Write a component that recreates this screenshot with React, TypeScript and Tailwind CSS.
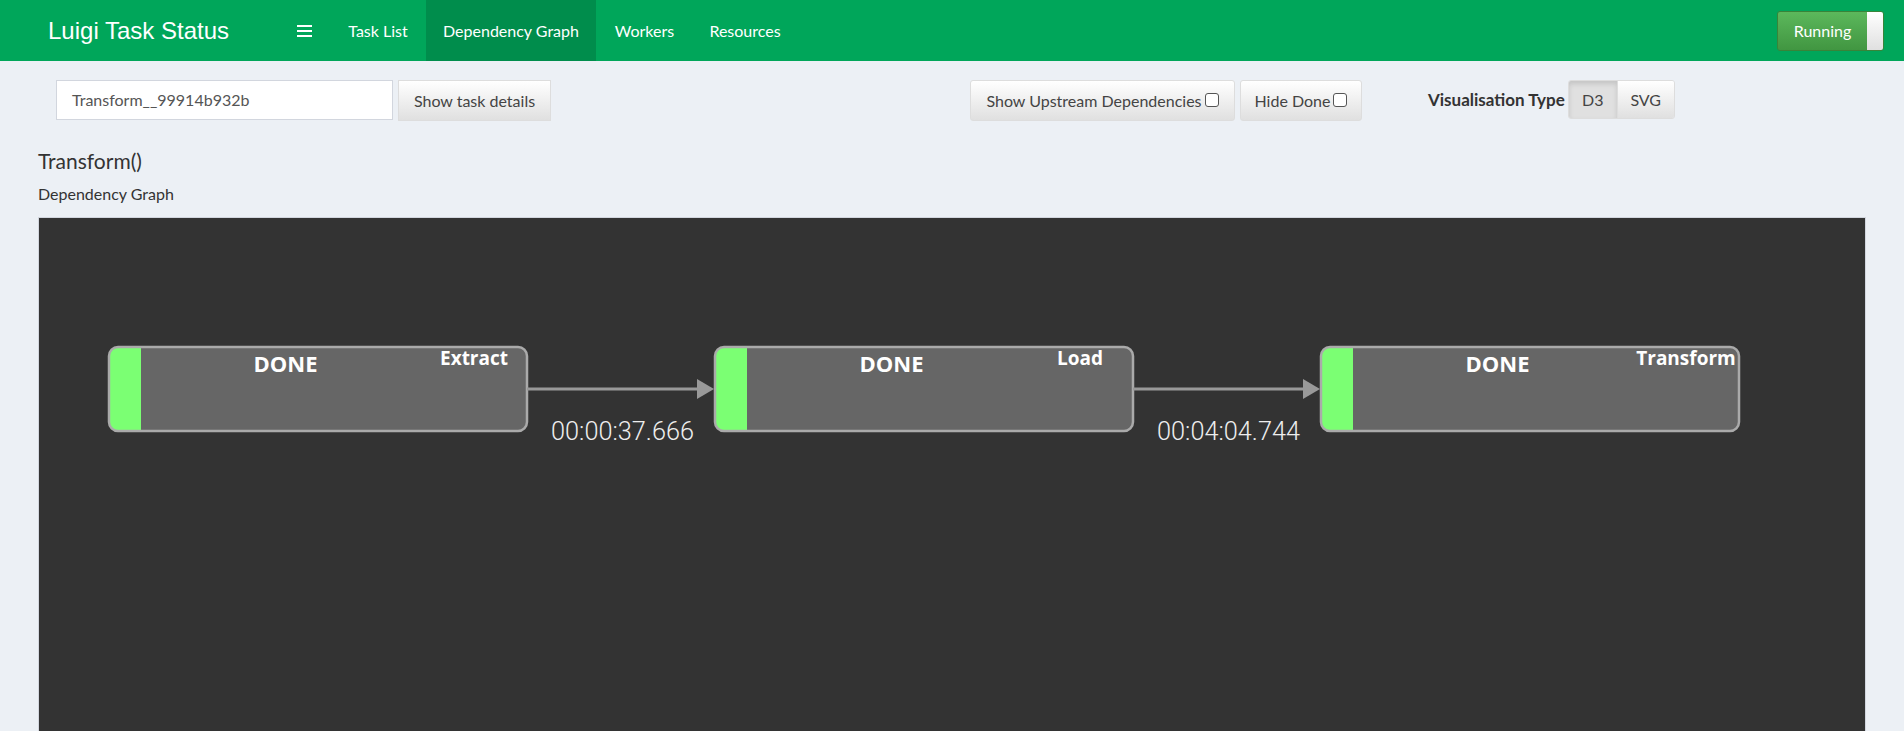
import React from 'react';

const sans = { fontFamily: 'Lato, "Open Sans", sans-serif' };

function Checkbox() {
  return <span className="ml-[3px] inline-block h-[14px] w-[14px] -translate-y-[1px] rounded-[3px] border border-[#555] bg-white align-middle" />;
}

function Node({ x, label }: { x: number; label: string }) {
  const y = 129;
  const w = 418;
  const h = 84;
  return (
    <g>
      <rect x={x} y={y} width={w} height={h} rx={9} fill="#666" />
      <path d={`M${x + 9} ${y} H${x + 32} V${y + h} H${x + 9} A9 9 0 0 1 ${x} ${y + h - 9} V${y + 9} A9 9 0 0 1 ${x + 9} ${y} Z`} fill="#7bff73" />
      <rect x={x} y={y} width={w} height={h} rx={9} fill="none" stroke="#aaa" strokeWidth={2.5} />
      <text x={x + 176.5} y={154} textAnchor="middle" fill="#fff" fontSize={22} fontWeight={700} style={{ fontFamily: '"Open Sans", sans-serif' }}>
        DONE
      </text>
      <text x={x + 365} y={147} textAnchor="middle" fill="#fff" fontSize={19} fontWeight={700} style={{ fontFamily: '"Open Sans", sans-serif' }}>
        {label}
      </text>
    </g>
  );
}

function Edge({ x1, x2, time }: { x1: number; x2: number; time: string }) {
  return (
    <g>
      <line x1={x1} y1={171} x2={x2 - 16} y2={171} stroke="#999" strokeWidth={3} />
      <path d={`M${x2 - 17} 161 L${x2} 171 L${x2 - 17} 181 Z`} fill="#999" />
      <text x={(x1 + x2) / 2 + 2} y={222} textAnchor="middle" fill="#eee" fontSize={25} fontWeight={300} textLength={143} lengthAdjust="spacingAndGlyphs" style={{ fontFamily: 'Roboto, "Open Sans", sans-serif' }}>
        {time}
      </text>
    </g>
  );
}

export default function App() {
  const tabs = [
    { name: 'Task List', w: 'w-[96px]', active: false },
    { name: 'Dependency Graph', w: 'w-[170px]', active: true },
    { name: 'Workers', w: 'w-[97px]', active: false },
    { name: 'Resources', w: 'w-[104px]', active: false },
  ];

  return (
    <div className="min-h-screen overflow-hidden bg-[#ecf0f5] text-[#333]" style={sans}>
      {/* Header */}
      <header className="flex h-[61px] items-stretch bg-[#00a65a] text-white">
        <div className="flex w-[282px] items-center pl-[48px] text-[24px]" style={{ fontFamily: '"Liberation Sans", Arial, sans-serif' }}>
          Luigi Task Status
        </div>
        <div className="flex w-[48px] items-center pl-[15px]">
          <div className="flex w-[15px] flex-col gap-[3px]">
            <span className="h-[2px] bg-white" />
            <span className="h-[2px] bg-white" />
            <span className="h-[2px] bg-white" />
          </div>
        </div>
        {tabs.map(t => (
          <div key={t.name} className={`flex ${t.w} items-center justify-center text-[16px] ${t.active ? 'bg-[#008d4c]' : ''}`}>
            {t.name}
          </div>
        ))}
        <div className="ml-auto mr-[20px] flex items-center">
          <div className="flex h-[40px] overflow-hidden rounded-[3px] border border-[#398439]">
            <div className="flex w-[89px] items-center justify-center bg-gradient-to-b from-[#5cb85c] to-[#419641] text-[16px] text-white">
              Running
            </div>
            <div className="w-[16px] bg-gradient-to-b from-white to-[#e0e0e0]" />
          </div>
        </div>
      </header>

      {/* Controls */}
      <div className="flex items-start pl-[56px] pt-[19px] text-[16px] text-[#444]">
        <div className="flex h-[40px] w-[337px] items-center border border-[#d2d6de] bg-white pl-[15px] text-[#555]">
          Transform__99914b932b
        </div>
        <button className="ml-[5px] h-[41px] w-[153px] border border-[#ddd] bg-gradient-to-b from-white to-[#e0e0e0] text-[#444]">
          Show task details
        </button>

        <button className="ml-[419px] flex h-[41px] w-[265px] items-center justify-center rounded-[3px] border border-[#ddd] bg-gradient-to-b from-white to-[#e0e0e0]">
          Show Upstream Dependencies
          <Checkbox />
        </button>
        <button className="ml-[5px] flex h-[41px] w-[122px] items-center justify-center rounded-[3px] border border-[#ddd] bg-gradient-to-b from-white to-[#e0e0e0]">
          Hide Done
          <Checkbox />
        </button>

        <div className="ml-[66px] flex h-[39px] items-center">
          <span className="text-[17px] font-bold text-[#333]">Visualisation Type</span>
          <div className="ml-[3px] flex h-[39px] overflow-hidden rounded-[3px] border border-[#ddd]">
            <div className="flex w-[48px] items-center justify-center bg-[#e0e0e0] shadow-[inset_0_3px_5px_rgba(0,0,0,0.125)]">D3</div>
            <div className="flex w-[57px] items-center justify-center border-l border-[#ddd] bg-gradient-to-b from-white to-[#e0e0e0]">SVG</div>
          </div>
        </div>
      </div>

      {/* Title */}
      <div className="px-[38px] pt-[26px]">
        <div className="text-[21px] leading-[28px] text-[#333]">Transform()</div>
        <div className="mt-[9px] text-[16px] leading-[20px] text-[#333]">Dependency Graph</div>
      </div>

      {/* Graph */}
      <div className="mx-[38px] mt-[13px] h-[530px] border border-[#d2d6de] bg-[#333]">
        <svg width="100%" height="100%">
          <Node x={70} label="Extract" />
          <Edge x1={488} x2={675} time="00:00:37.666" />
          <Node x={676} label="Load" />
          <Edge x1={1094} x2={1281} time="00:04:04.744" />
          <Node x={1282} label="Transform" />
        </svg>
      </div>
    </div>
  );
}
